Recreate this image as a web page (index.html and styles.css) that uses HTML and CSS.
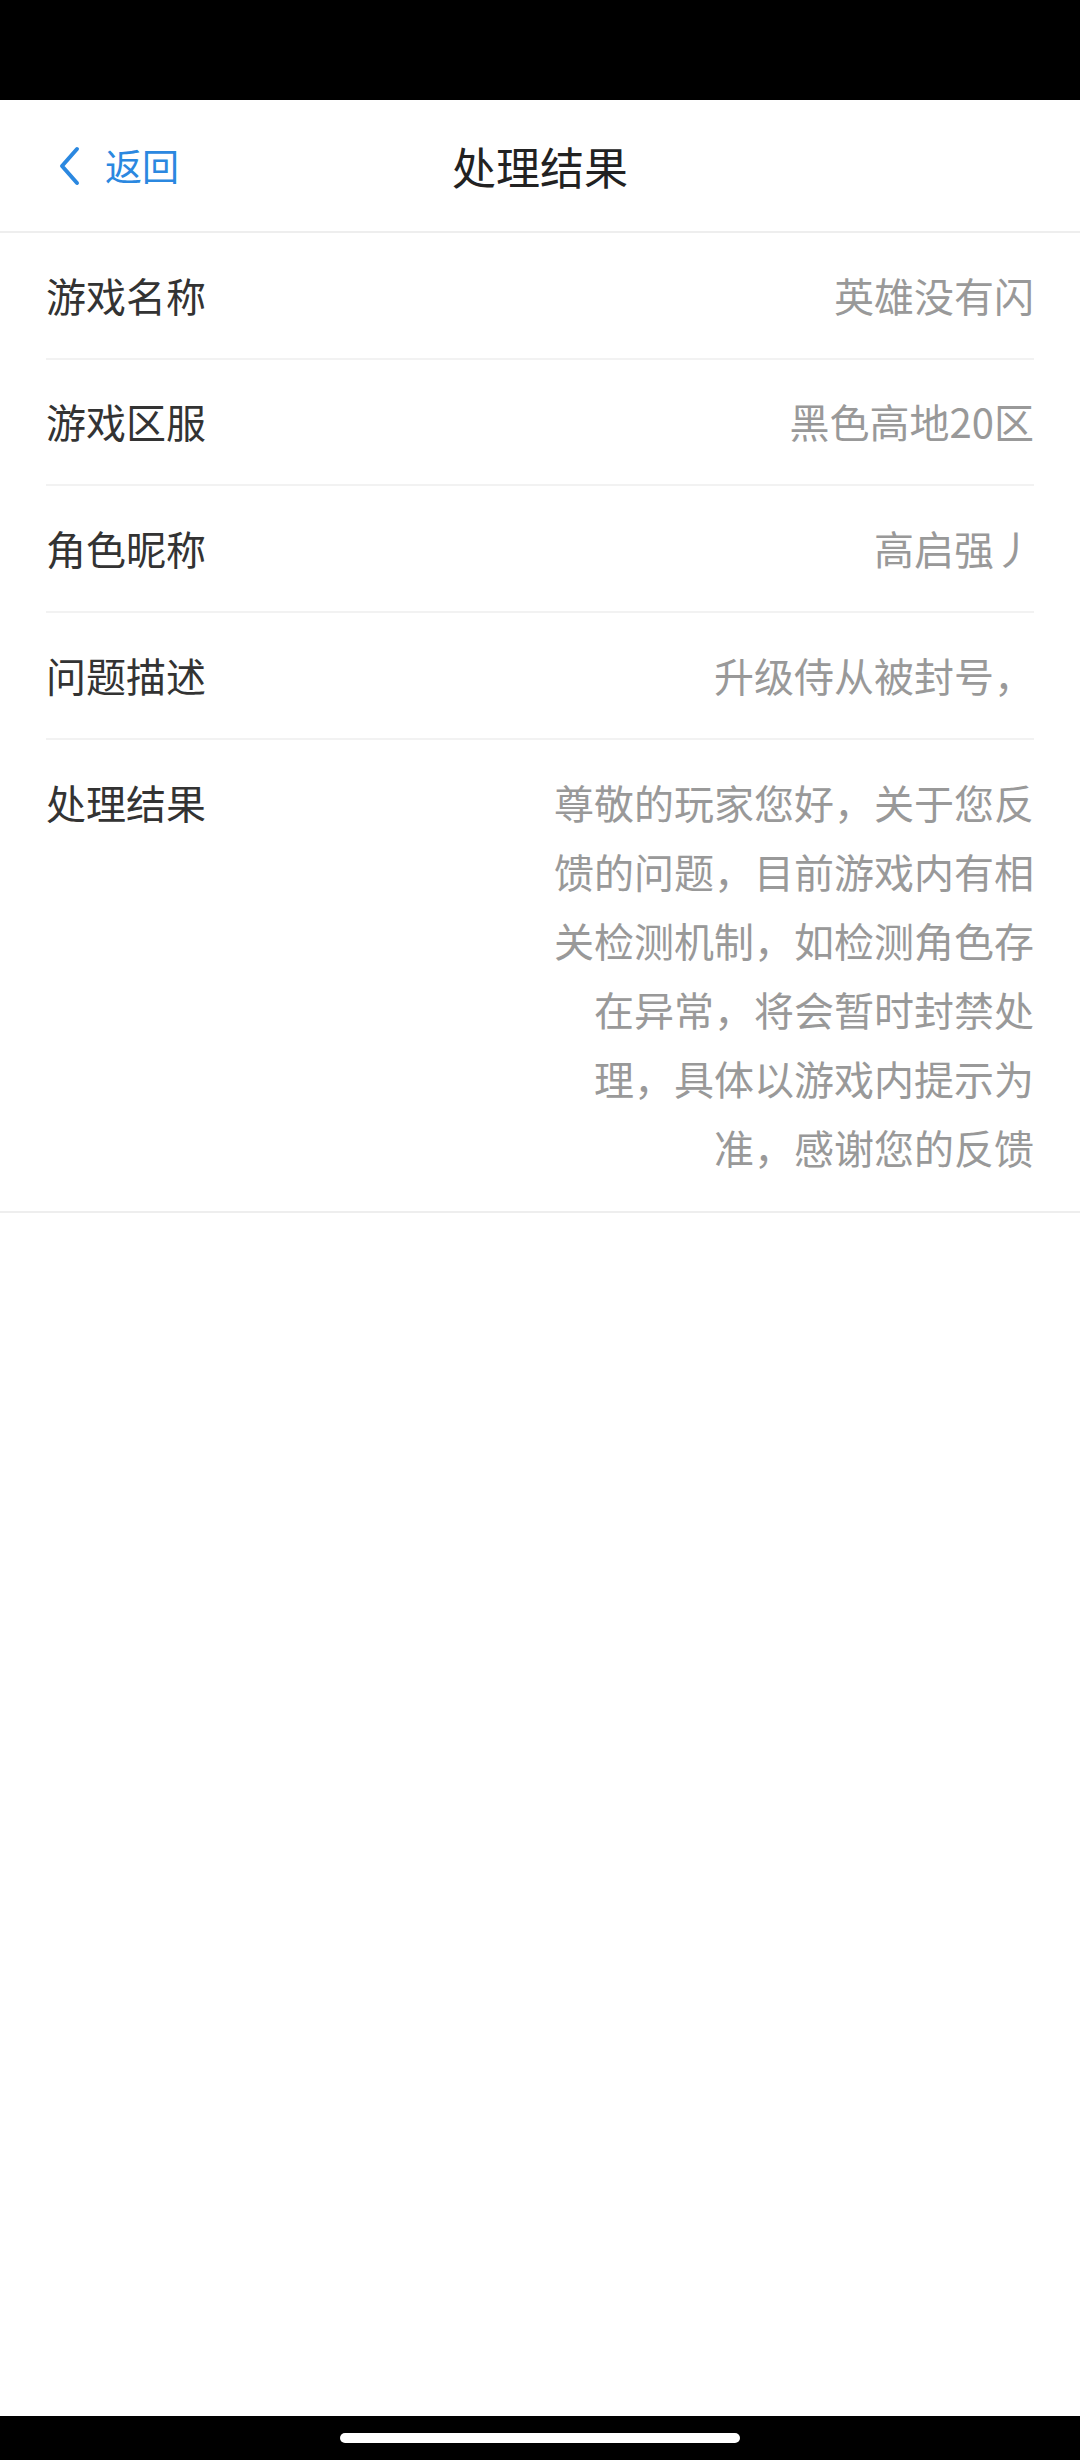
FILE: index.html
```html
<!DOCTYPE html>
<html lang="zh-CN">
<head>
<meta charset="utf-8">
<title>处理结果</title>
<link rel="stylesheet" href="styles.css">
</head>
<body>
<div class="screen">
  <div class="status-bar"></div>
  <header class="nav">
    <div class="back">
      <svg class="chevron" width="24" height="40" viewBox="0 0 24 40">
        <polyline points="19,3 4,20 19,37" fill="none" stroke="#2b88e0" stroke-width="4" stroke-linecap="round" stroke-linejoin="round"/>
      </svg>
      <span class="back-text">返回</span>
    </div>
    <h1 class="title">处理结果</h1>
  </header>
  <main class="list">
    <div class="row">
      <span class="label">游戏名称</span>
      <span class="value">英雄没有闪</span>
    </div>
    <div class="row">
      <span class="label">游戏区服</span>
      <span class="value">黑色高地20区</span>
    </div>
    <div class="row">
      <span class="label">角色昵称</span>
      <span class="value">高启强丿</span>
    </div>
    <div class="row">
      <span class="label">问题描述</span>
      <span class="value">升级侍从被封号，</span>
    </div>
    <div class="row row-multi">
      <span class="label">处理结果</span>
      <span class="value value-multi">尊敬的玩家您好，关于您反馈的问题，目前游戏内有相关检测机制，如检测角色存在异常，将会暂时封禁处理，具体以游戏内提示为准，感谢您的反馈</span>
    </div>
  </main>
  <div class="spacer"></div>
  <div class="home-bar"><div class="pill"></div></div>
</div>
</body>
</html>
```

FILE: styles.css
```css
html, body {
  margin: 0;
  padding: 0;
  background: #ffffff;
}

body {
  font-family: "Noto Sans CJK SC", "Noto Sans", Roboto, sans-serif;
}

.screen {
  width: 1080px;
  height: 2460px;
  display: flex;
  flex-direction: column;
  overflow: hidden;
}

.status-bar {
  height: 100px;
  background: #000000;
  flex: none;
}

.nav {
  flex: none;
  height: 131px;
  border-bottom: 2px solid #eeeeee;
  display: flex;
  align-items: center;
  justify-content: center;
  position: relative;
}

.back {
  position: absolute;
  left: 58px;
  top: 0;
  bottom: 0;
  display: flex;
  align-items: center;
  color: #2b88e0;
}

.chevron {
  display: block;
}

.back-text {
  font-size: 37px;
  margin-left: 23px;
  line-height: 1;
}

.title {
  margin: 0;
  font-size: 44px;
  font-weight: 400;
  color: #222222;
  line-height: 1;
}

.list {
  flex: none;
  border-bottom: 2px solid #eeeeee;
}

.row {
  margin: 0 46px;
  height: 124.67px;
  border-bottom: 2px solid #f2f2f2;
  display: flex;
  align-items: center;
  justify-content: space-between;
  font-size: 40px;
  line-height: 69px;
}

.row-multi {
  height: auto;
  border-bottom: none;
  align-items: flex-start;
  padding: 28px 0 29px;
}

.label {
  color: #333333;
  flex: none;
}

.value {
  color: #999999;
  text-align: right;
}

.value-multi {
  width: 500px;
  line-break: strict;
}

.spacer {
  flex: 1;
}

.home-bar {
  flex: none;
  height: 44px;
  background: #000000;
  display: flex;
  justify-content: center;
  padding-top: 17px;
  box-sizing: border-box;
}

.pill {
  width: 400px;
  height: 10px;
  border-radius: 5px;
  background: #ffffff;
}
```
